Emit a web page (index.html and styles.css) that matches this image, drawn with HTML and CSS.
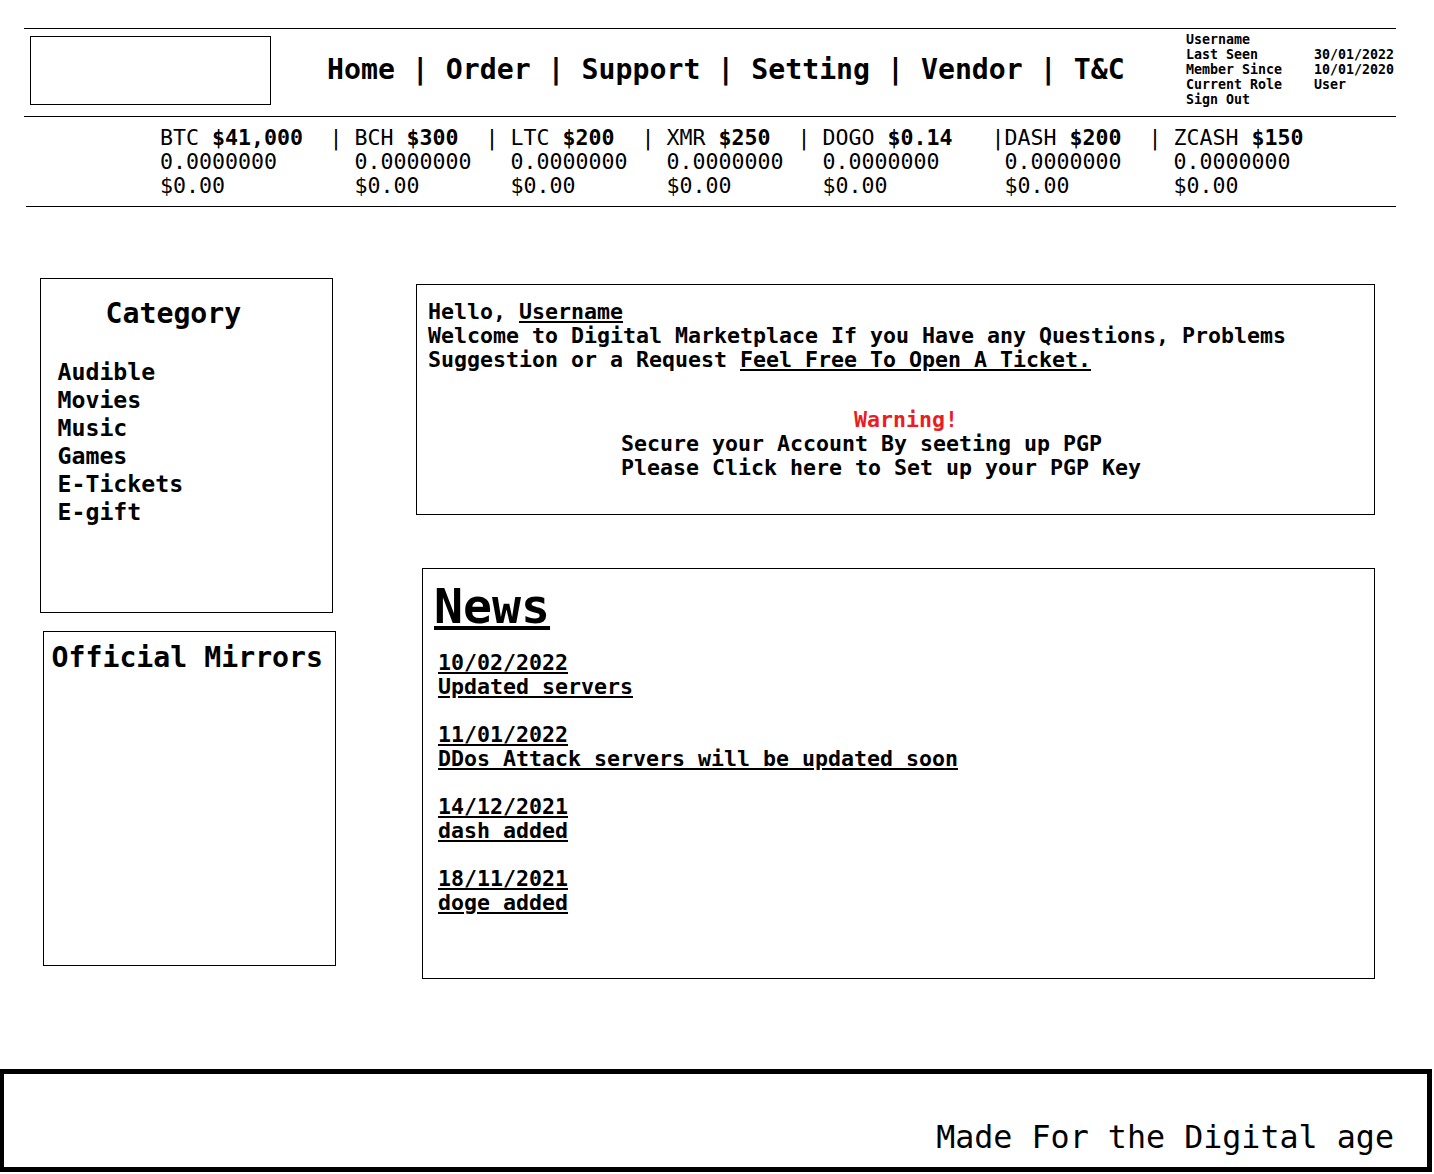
FILE: index.html
```html
<!DOCTYPE html>
<html lang="en">
<head>
<meta charset="utf-8">
<title>Digital Marketplace</title>
<link rel="stylesheet" href="styles.css">
</head>
<body>
<header class="topbar">
  <div class="logo"></div>
  <nav class="nav">Home | Order | Support | Setting | Vendor | T&amp;C</nav>
  <div class="userinfo">
    <span>Username</span><span></span>
    <span>Last Seen</span><span>30/01/2022</span>
    <span>Member Since</span><span>10/01/2020</span>
    <span>Current Role</span><span>User</span>
    <span>Sign Out</span><span></span>
  </div>
</header>

<section class="prices">
  <div class="coin">BTC <b>$41,000</b><br>0.0000000<br>$0.00</div>
  <div class="sep">|</div>
  <div class="coin pad">BCH <b>$300</b><br>0.0000000<br>$0.00</div>
  <div class="sep">|</div>
  <div class="coin pad">LTC <b>$200</b><br>0.0000000<br>$0.00</div>
  <div class="sep">|</div>
  <div class="coin pad">XMR <b>$250</b><br>0.0000000<br>$0.00</div>
  <div class="sep">|</div>
  <div class="coin pad">DOGO <b>$0.14</b><br>0.0000000<br>$0.00</div>
  <div class="sep">|</div>
  <div class="coin">DASH <b>$200</b><br>0.0000000<br>$0.00</div>
  <div class="sep">|</div>
  <div class="coin pad">ZCASH <b>$150</b><br>0.0000000<br>$0.00</div>
</section>

<main class="main">
  <aside class="leftcol">
    <div class="category">
      <h2 class="cat-title">Category</h2>
      <ul class="cat-list">
        <li>Audible</li>
        <li>Movies</li>
        <li>Music</li>
        <li>Games</li>
        <li>E-Tickets</li>
        <li>E-gift</li>
      </ul>
    </div>
    <div class="mirrors">
      <h2 class="mirror-title">Official Mirrors</h2>
    </div>
  </aside>

  <div class="rightcol">
    <div class="hello">
      <p class="greet">Hello, <a class="link" href="#">Username</a><br>Welcome to Digital Marketplace If you Have any Questions, Problems<br>Suggestion or a Request <a class="link" href="#">Feel Free To Open A Ticket.</a></p>
      <div class="warnblock">
        <div class="warning">Warning!</div>
        <div>Secure your Account By seeting up PGP</div>
        <div>Please Click here to Set up your PGP Key</div>
      </div>
    </div>

    <div class="news">
      <h1 class="news-title">News</h1>
      <div class="news-list">
        <a class="link" href="#">10/02/2022<br>Updated servers</a><br><br>
        <a class="link" href="#">11/01/2022<br>DDos Attack servers will be updated soon</a><br><br>
        <a class="link" href="#">14/12/2021<br>dash added</a><br><br>
        <a class="link" href="#">18/11/2021<br>doge added</a>
      </div>
    </div>
  </div>
</main>

<footer class="footer">Made For the Digital age</footer>
</body>
</html>
```

FILE: styles.css
```css
* { box-sizing: border-box; }

body {
  margin: 0;
  font-family: "DejaVu Sans Mono", monospace;
  color: #000;
  background: #fff;
}

.topbar {
  margin: 28px 38px 0 24px;
  height: 89px;
  border-top: 1px solid #000;
  border-bottom: 1px solid #000;
  display: flex;
  align-items: flex-start;
  padding-top: 3px;
}

.logo {
  margin: 4px 0 0 6px;
  width: 241px;
  height: 69px;
  border: 1px solid #000;
  flex: none;
}

.nav {
  margin: 21px 0 0 56px;
  font-size: 28.2px;
  font-weight: bold;
  white-space: nowrap;
}

.userinfo {
  margin-left: auto;
  width: 210px;
  display: grid;
  grid-template-columns: 128px auto;
  font-size: 13.3px;
  line-height: 15px;
  font-weight: bold;
}

.prices {
  margin: 0 38px 0 26px;
  border-bottom: 1px solid #000;
  padding: 9px 0 8px 134px;
  display: grid;
  grid-template-columns: 166px 20px 136px 20px 136px 20px 136px 20px 177.5px 13px 140.5px 20px auto;
  font-size: 21.6px;
  line-height: 24px;
}

.coin { white-space: nowrap; }
.coin.pad { padding-left: 8.5px; }
.sep { text-align: center; }

.main {
  margin-top: 71px;
  padding-left: 40px;
  display: flex;
  align-items: flex-start;
}

.leftcol {
  width: 296px;
  flex: none;
}

.category {
  width: 293px;
  height: 335px;
  border: 1px solid #000;
  padding: 18px 0 0 16.5px;
}

.cat-title {
  margin: 0 0 28px 48px;
  font-size: 28.2px;
  line-height: normal;
}

.cat-list {
  list-style: none;
  margin: 0;
  padding: 0;
  font-size: 23.2px;
  line-height: 28px;
  font-weight: bold;
}

.mirrors {
  margin: 18px 0 0 3px;
  width: 293px;
  height: 335px;
  border: 1px solid #000;
  padding: 9px 0 0 7.5px;
}

.mirror-title {
  margin: 0;
  font-size: 28.2px;
  line-height: normal;
  white-space: nowrap;
}

.rightcol {
  margin-left: 80px;
  width: 959px;
  font-size: 21.6px;
  line-height: 24px;
  font-weight: bold;
}

.hello {
  margin-top: 6px;
  height: 231px;
  border: 1px solid #000;
  padding: 15px 0 0 11px;
}

.greet { margin: 0; white-space: nowrap; }

.link {
  color: #000;
  text-decoration: underline;
}

.warnblock {
  margin: 36px 0 0 193px;
}

.warning {
  color: #ec1c24;
  padding-left: 233px;
}

.news {
  margin: 53px 0 0 6px;
  width: 953px;
  height: 411px;
  border: 1px solid #000;
  padding: 9px 0 0 11px;
}

.news-title {
  margin: 0;
  font-size: 48.2px;
  line-height: normal;
  text-decoration: underline;
}

.news-list {
  margin: 17px 0 0 4px;
}

.footer {
  margin-top: 90px;
  width: 1432px;
  height: 103px;
  border: 5px solid #000;
  border-left-width: 4px;
  padding: 0 33px 12px 0;
  display: flex;
  align-items: flex-end;
  justify-content: flex-end;
  font-size: 31.7px;
  line-height: normal;
}
```
